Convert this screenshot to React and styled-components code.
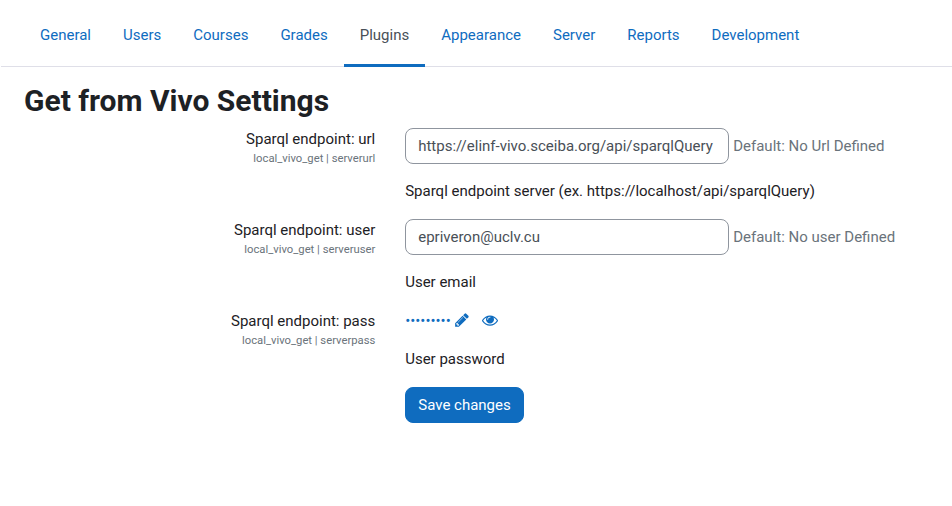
import React from "react";
import styled, { createGlobalStyle } from "styled-components";

const Global = createGlobalStyle`
  *, *::before, *::after { box-sizing: border-box; }
  body { margin: 0; background: #fff; color: #1d2125; font-family: Roboto, sans-serif; font-size: 15px; line-height: 22.5px; }
`;
const Page = styled.main`min-height: 506px; overflow: hidden;`;
const Tabs = styled.nav`display: flex; height: 67px; margin-left: 1px; padding: 4px 0 0 23px; border-bottom: 1px solid #dfdfe8;`;
const Tab = styled.a`
  height: 63px; padding: 0 16px; line-height: 62px; text-decoration: none;
  color: ${(p) => (p.$active ? "#495057" : "#0f6cbf")};
  border-bottom: 3px solid ${(p) => (p.$active ? "#0f6cbf" : "transparent")};
`;
const Title = styled.h2`margin: 16px 0 9px 24px; font-size: 30px; line-height: 36px; font-weight: 700;`;
const Row = styled.div`display: grid; grid-template-columns: 375.25px 1fr; column-gap: 29.95px; height: ${(p) => p.$height}px;`;
const Label = styled.div`text-align: right;`;
const Key = styled.small`display: block; font-size: 11.25px; line-height: 16px; color: #6a737b;`;
const Field = styled.div`display: flex; align-items: center; gap: 4px; height: 36px;`;
const Input = styled.input`
  width: 324px; height: 36px; padding: 6px 12px; border: 1px solid #8f959e; border-radius: 8px;
  font: inherit; color: #495057; background: #fff;
`;
const Default = styled.span`color: #6a737b;`;
const Help = styled.p`margin: 16px 0 0;`;
const Secret = styled.div`display: flex; align-items: center; color: #0f6cbf; height: 22px;`;
const Icon = styled.svg`
  width: 16px; height: 16px; fill: currentColor;
  margin: 0 0 1.2px ${(p) => p.$gap}px;
`;
const Save = styled.button`
  display: block; margin-left: 405px; width: 119px; height: 36px; padding: 0; border: 1px solid #0f6cbf; border-radius: 8px;
  background: #0f6cbf; color: #fff; font: inherit;
`;
const tabs = ["General", "Users", "Courses", "Grades", "Plugins", "Appearance", "Server", "Reports", "Development"];

function Setting({ name, id, help, height, children }) {
  return (
    <Row $height={height}>
      <Label>{name}<Key>local_vivo_get | {id}</Key></Label>
      <div>{children}<Help>{help}</Help></div>
    </Row>
  );
}

export default function App() {
  return (
    <Page>
      <Global />
      <Tabs>{tabs.map((t) => <Tab key={t} $active={t === "Plugins"}>{t}</Tab>)}</Tabs>
      <Title>Get from Vivo Settings</Title>
      <Setting name="Sparql endpoint: url" id="serverurl" height={91} help="Sparql endpoint server (ex. https://localhost/api/sparqlQuery)">
        <Field><Input defaultValue="https://elinf-vivo.sceiba.org/api/sparqlQuery" /><Default>Default: No Url Defined</Default></Field>
      </Setting>
      <Setting name="Sparql endpoint: user" id="serveruser" height={91} help="User email">
        <Field><Input defaultValue="epriveron@uclv.cu" /><Default>Default: No user Defined</Default></Field>
      </Setting>
      <Setting name="Sparql endpoint: pass" id="serverpass" height={77} help="User password">
        <Secret>
          •••••••••
          <Icon $gap={3.4} viewBox="0 0 1792 1792">
            <path d="M491 1536l91-91-235-235-91 91v107h128v128h107zm523-928q0-22-22-22-10 0-17 7l-542 542q-7 7-7 17 0 22 22 22 10 0 17-7l542-542q7-7 7-17zm-54-192l416 416-832 832h-416v-416zm683 96q0 53-37 90l-166 166-416-416 166-165q36-38 90-38 53 0 91 38l235 234q37 39 37 91z" />
          </Icon>
          <Icon $gap={11.4} viewBox="0 0 1792 1792">
            <path d="M1664 960q-152-236-381-353 61 104 61 225 0 185-131.5 316.5t-316.5 131.5-316.5-131.5-131.5-316.5q0-121 61-225-229 117-381 353 133 205 333.5 326.5t434.5 121.5 434.5-121.5 333.5-326.5zm-720-384q0-20-14-34t-34-14q-125 0-214.5 89.5t-89.5 214.5q0 20 14 34t34 14 34-14 14-34q0-86 61-147t147-61q20 0 34-14t14-34zm848 384q0 34-20 69-140 230-376.5 368.5t-499.5 138.5-499.5-139-376.5-368q-20-35-20-69t20-69q140-229 376.5-368t499.5-139 499.5 139 376.5 368q20 35 20 69z" />
          </Icon>
        </Secret>
      </Setting>
      <Save>Save changes</Save>
    </Page>
  );
}
